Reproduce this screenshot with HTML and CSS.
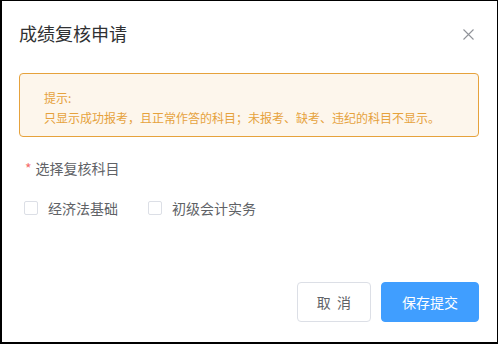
FILE: index.html
```html
<!DOCTYPE html>
<html lang="zh">
<head>
<meta charset="utf-8">
<link rel="stylesheet" href="styles.css">
</head>
<body>
<div class="dialog">
  <div class="header">
    <span class="title">成绩复核申请</span>
    <span class="close" aria-label="关闭">
      <svg width="11" height="11" viewBox="0 0 11 11"><path d="M0.5 0.5 L10.5 10.5 M10.5 0.5 L0.5 10.5" stroke="#909399" stroke-width="1.1" fill="none"/></svg>
    </span>
  </div>
  <div class="body">
    <div class="alert">
      <div class="alert-line">提示:</div>
      <div class="alert-line">只显示成功报考，且正常作答的科目；未报考、缺考、违纪的科目不显示。</div>
    </div>
    <div class="field-label"><span class="req">*</span>选择复核科目</div>
    <div class="checks">
      <label class="check"><span class="box"></span><span class="check-text">经济法基础</span></label>
      <label class="check"><span class="box"></span><span class="check-text">初级会计实务</span></label>
    </div>
  </div>
  <div class="footer">
    <button class="btn btn-default">取 消</button>
    <button class="btn btn-primary">保存提交</button>
  </div>
</div>
</body>
</html>
```

FILE: styles.css
```css
html, body {
  margin: 0;
  padding: 0;
  background: #fff;
}
body {
  font-family: "Noto Sans CJK SC", "Noto Sans", "Liberation Sans", sans-serif;
}
.dialog {
  width: 498px;
  height: 344px;
  box-sizing: border-box;
  border: 1px solid #000;
  border-left-width: 2px;
  border-bottom-width: 2px;
  display: flex;
  flex-direction: column;
  background: #fff;
}
.header {
  display: flex;
  justify-content: space-between;
  align-items: center;
  padding: 20px 23px 0 17px;
  height: 24px;
}
.title {
  font-size: 18px;
  line-height: 24px;
  color: #303133;
}
.close {
  display: flex;
  width: 11px;
  height: 11px;
  margin-top: 2px;
}
.body {
  padding: 28px 18px 0 17px;
}
.alert {
  border: 1px solid #e6a23c;
  border-radius: 4px;
  background: #fdf6ec;
  padding: 14px 24px 8px 24px;
  color: #e6a23c;
  font-size: 12px;
  line-height: 20px;
}
.field-label {
  margin-top: 21px;
  padding-left: 6px;
  font-size: 14px;
  line-height: 20px;
  color: #606266;
}
.req {
  color: #f56c6c;
  margin-right: 4px;
}
.checks {
  display: flex;
  margin-top: 20px;
  padding-left: 5px;
}
.check {
  display: flex;
  align-items: center;
  margin-right: 30px;
  font-size: 14px;
  line-height: 20px;
  color: #606266;
}
.box {
  width: 12px;
  height: 12px;
  border: 1px solid #dcdfe6;
  border-radius: 2px;
  background: #fff;
  margin-right: 10px;
}
.footer {
  margin-top: auto;
  display: flex;
  justify-content: flex-end;
  gap: 10px;
  padding: 0 18px 20px 0;
}
.btn {
  height: 40px;
  box-sizing: border-box;
  padding: 0 20px;
  font-family: inherit;
  font-size: 14px;
  line-height: 1;
  border-radius: 4px;
  border: 1px solid #dcdfe6;
  cursor: pointer;
}
.btn-default {
  background: #fff;
  color: #606266;
  padding: 0 19px;
  word-spacing: 3px;
}
.btn-primary {
  background: #409eff;
  border-color: #409eff;
  color: #fff;
}
```
